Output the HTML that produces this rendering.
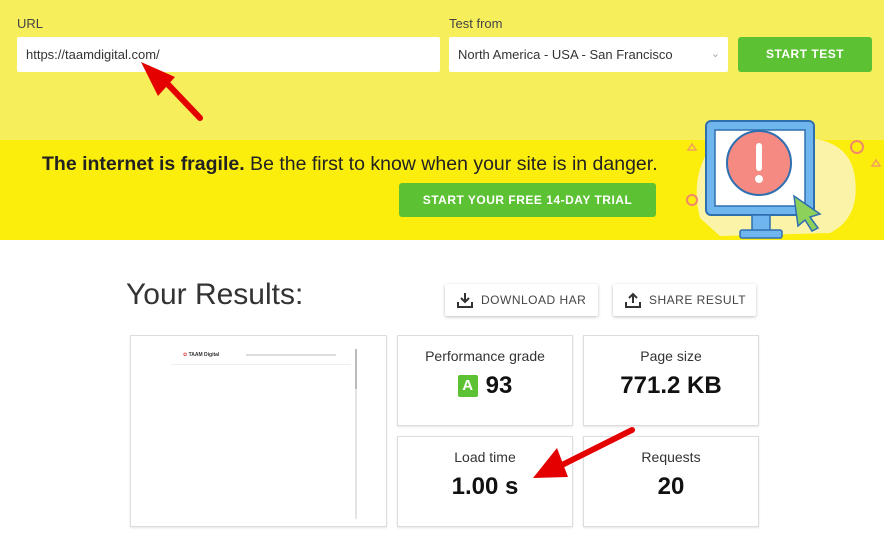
<!DOCTYPE html>
<html><head><style>
*{margin:0;padding:0;box-sizing:border-box}
body{width:884px;height:544px;overflow:hidden;background:#fff;font-family:"Liberation Sans",sans-serif;position:relative;color:#222}
.top{position:absolute;left:0;top:0;width:884px;height:140px;background:#f6ee5b}
.ban{position:absolute;left:0;top:140px;width:884px;height:100px;background:#fcee0c}
.lbl{position:absolute;font-size:13px;color:#444}
.inp{position:absolute;background:#fff;border-radius:2px;font-size:13px;color:#333;padding-left:9px;line-height:35px;height:35px;top:37px}
.btn{position:absolute;background:#5cc233;color:#fff;font-weight:bold;font-size:12px;text-align:center;border-radius:3px;letter-spacing:.5px}
.card{position:absolute;background:#fff;border:1px solid #ddd;box-shadow:0 1px 2px rgba(0,0,0,.1);text-align:center}
.card .t{font-size:14px;color:#333;margin-top:12px}
.card .v{font-size:24px;font-weight:bold;color:#111;margin-top:8px}
.ob{position:absolute;top:284px;height:32px;background:#fff;box-shadow:0 1px 3px rgba(0,0,0,.25);border-radius:2px;font-size:12px;color:#444;letter-spacing:.5px;line-height:32px}
</style></head><body>
<div class="top"></div>
<div class="ban"></div>
<div class="lbl" style="left:17px;top:16px">URL</div>
<div class="lbl" style="left:449px;top:16px">Test from</div>
<div class="inp" style="left:17px;width:423px">https://taamdigital.com/</div>
<div class="inp" style="left:449px;width:279px">North America - USA - San Francisco<span style="position:absolute;right:8px;color:#aaa;font-size:11px">&#8964;</span></div>
<div class="btn" style="left:738px;top:37px;width:134px;height:35px;line-height:35px">START TEST</div>
<div style="position:absolute;left:42px;top:153px;font-size:19.5px;color:#222;white-space:nowrap"><b>The internet is fragile.</b> Be the first to know when your site is in danger.</div>
<div class="btn" style="left:399px;top:183px;width:257px;height:34px;line-height:34px">START YOUR FREE 14-DAY TRIAL</div>
<svg style="position:absolute;left:680px;top:118px" width="204" height="122">
<path d="M20 100 Q10 60 30 30 Q60 10 120 20 Q170 20 175 60 Q180 100 150 115 L40 118Z" fill="#fbf4a8"/>
<rect x="26" y="3" width="108" height="94" rx="5" fill="#6fb6ef" stroke="#2f6fb0" stroke-width="2"/>
<rect x="35" y="12" width="90" height="76" fill="#fff" stroke="#2f6fb0" stroke-width="1.5"/>
<rect x="72" y="97" width="18" height="16" fill="#6fb6ef" stroke="#2f6fb0" stroke-width="1.5"/>
<rect x="60" y="112" width="42" height="8" rx="2" fill="#6fb6ef" stroke="#2f6fb0" stroke-width="1.5"/>
<circle cx="79" cy="45" r="32" fill="#f48a82" stroke="#2f6fb0" stroke-width="2"/>
<rect x="76" y="25" width="6" height="28" rx="3" fill="#fff"/><circle cx="79" cy="61" r="4" fill="#fff"/>
<path d="M114 78 L140 96 L130 99 L138 110 L132 113 L125 102 L118 108Z" fill="#8ed15a" stroke="#2f6fb0" stroke-width="1.5"/>
<circle cx="12" cy="82" r="5" fill="none" stroke="#f08a6a" stroke-width="2"/>
<circle cx="177" cy="29" r="6" fill="none" stroke="#f08a6a" stroke-width="2"/>
<path d="M8 32 l4 -6 l4 6z M192 48 l4 -6 l4 6z" fill="none" stroke="#f0a060" stroke-width="1.5"/>
</svg>
<div style="position:absolute;left:126px;top:278px;font-size:30px;color:#333">Your Results:</div>
<div class="ob" style="left:445px;width:153px;padding-left:36px"><svg style="position:absolute;left:12px;top:8px" width="16" height="16"><path d="M8 1v9M4 6l4 4 4-4M1 10v5h14v-5" fill="none" stroke="#333" stroke-width="2"/></svg>DOWNLOAD HAR</div>
<div class="ob" style="left:613px;width:143px;padding-left:36px"><svg style="position:absolute;left:12px;top:8px" width="16" height="16"><path d="M8 11V2M4 6l4-4 4 4M1 10v5h14v-5" fill="none" stroke="#333" stroke-width="2"/></svg>SHARE RESULT</div>
<div class="card" style="left:130px;top:335px;width:257px;height:192px">
<div style="position:absolute;left:52px;top:16px;font-size:5px;color:#d33">✿ <b style="color:#333">TAAM Digital</b></div>
<div style="position:absolute;left:115px;top:18px;width:90px;height:2px;background:#ddd"></div>
<div style="position:absolute;left:40px;top:28px;width:180px;height:1px;background:#eee"></div>
<div style="position:absolute;left:224px;top:13px;width:2px;height:170px;background:#e4e4e4"></div>
<div style="position:absolute;left:224px;top:13px;width:2px;height:40px;background:#bbb"></div>
</div>
<div class="card" style="left:397px;top:335px;width:176px;height:91px"><div class="t">Performance grade</div><div class="v"><span style="display:inline-block;background:#5cc233;color:#fff;font-size:15px;width:20px;height:22px;line-height:22px;border-radius:2px;vertical-align:3px;margin-right:8px">A</span>93</div></div>
<div class="card" style="left:583px;top:335px;width:176px;height:91px"><div class="t">Page size</div><div class="v">771.2 KB</div></div>
<div class="card" style="left:397px;top:436px;width:176px;height:91px"><div class="t">Load time</div><div class="v">1.00 s</div></div>
<div class="card" style="left:583px;top:436px;width:176px;height:91px"><div class="t">Requests</div><div class="v">20</div></div>
<svg style="position:absolute;left:0;top:0" width="884" height="544">
<path d="M200 118 L160 76" stroke="#e50000" stroke-width="6" stroke-linecap="round"/>
<path d="M141 62 L175 77 L158 96Z" fill="#e50000"/>
<path d="M632 430 L560 466" stroke="#e50000" stroke-width="6" stroke-linecap="round"/>
<path d="M533 478 L557 448 L568 477Z" fill="#e50000"/>
</svg>
</body></html>
